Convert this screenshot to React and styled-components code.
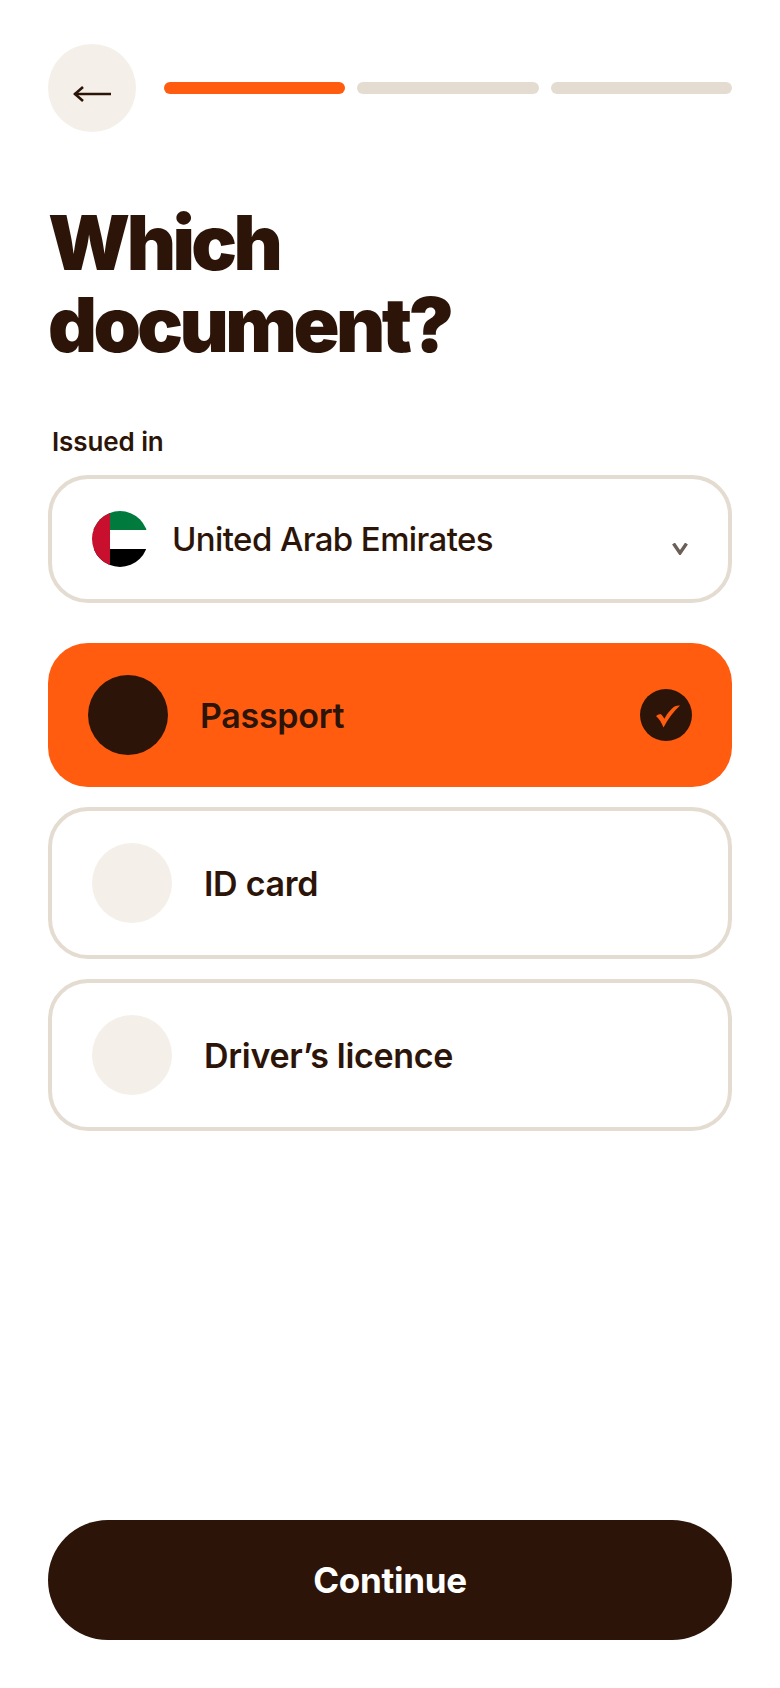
import styled, { createGlobalStyle } from "styled-components";

const dark = "#2c1508";
const orange = "#ff5c10";
const sand = "#e4dcd1";
const cream = "#f4f0e9";

const GlobalStyle = createGlobalStyle`
  html, body { margin: 0; padding: 0; background: #fff; }
  body { font-family: Inter, "Liberation Sans", sans-serif; color: ${dark}; }
`;

const Page = styled.div`
  box-sizing: border-box;
  width: 780px;
  height: 1688px;
  padding: 44px 48px 48px;
  display: flex;
  flex-direction: column;
`;

const TopBar = styled.div`
  display: flex;
  align-items: center;
  gap: 28px;
`;

const BackButton = styled.button`
  flex: none;
  width: 88px;
  height: 88px;
  padding: 11px 0 0;
  border: none;
  border-radius: 50%;
  background: ${cream};
  display: flex;
  align-items: center;
  justify-content: center;
`;

const Progress = styled.div`
  flex: 1;
  display: flex;
  gap: 12px;
`;

const Step = styled.div`
  flex: 1;
  height: 12px;
  border-radius: 6px;
  background: ${(p) => (p.$active ? orange : sand)};
`;

const Title = styled.h1`
  margin: 69px 0 0;
  font-size: 76px;
  line-height: 82px;
  font-weight: 900;
  letter-spacing: -3.6px;
`;

const Label = styled.div`
  margin: 61px 0 0 4px;
  font-size: 26px;
  line-height: 32px;
  font-weight: 600;
  letter-spacing: -0.1px;
`;

const Select = styled.div`
  box-sizing: border-box;
  margin-top: 17px;
  height: 128px;
  padding: 0 40px;
  border: 4px solid ${sand};
  border-radius: 40px;
  display: flex;
  align-items: center;
  gap: 24px;
`;

const Flag = styled.svg`
  flex: none;
  width: 56px;
  height: 56px;
  border-radius: 50%;
`;

const SelectText = styled.span`
  flex: 1;
  font-size: 33px;
  font-weight: 500;
  letter-spacing: -0.6px;
`;

const Chevron = styled.svg`
  flex: none;
  margin: 20px 0 0;
`;

const Options = styled.div`
  margin-top: 40px;
  display: flex;
  flex-direction: column;
  gap: 20px;
`;

const Option = styled.div`
  padding: 32px 40px;
  border: ${(p) => (p.$selected ? "none" : `4px solid ${sand}`)};
  border-radius: 40px;
  background: ${(p) => (p.$selected ? orange : "#fff")};
  display: flex;
  align-items: center;
  gap: 32px;
`;

const OptionIcon = styled.div`
  flex: none;
  width: 80px;
  height: 80px;
  border-radius: 50%;
  background: ${(p) => (p.$selected ? dark : cream)};
`;

const OptionText = styled.span`
  flex: 1;
  font-size: 34px;
  font-weight: 600;
  letter-spacing: -0.3px;
`;

const Check = styled.svg`
  flex: none;
  width: 52px;
  height: 52px;
`;

const Continue = styled.button`
  margin-top: auto;
  height: 120px;
  border: none;
  border-radius: 60px;
  background: ${dark};
  color: #fff;
  font-family: inherit;
  font-size: 35px;
  font-weight: 700;
  letter-spacing: -0.3px;
`;

export default function App() {
  return (
    <Page>
      <GlobalStyle />
      <TopBar>
        <BackButton aria-label="Back">
          <svg width="38" height="16" viewBox="0 0 38 16" fill="none" stroke={dark}>
            <path d="M1.5 8H38" strokeWidth="2.6" />
            <path d="M10 1L2 8L10 15" strokeWidth="2.6" />
          </svg>
        </BackButton>
        <Progress>
          <Step $active />
          <Step />
          <Step />
        </Progress>
      </TopBar>

      <Title>
        Which
        <br />
        document?
      </Title>

      <Label>Issued in</Label>
      <Select>
        <Flag viewBox="0 0 56 56">
          <rect width="56" height="19" fill="#007a3d" />
          <rect y="19" width="56" height="19" fill="#fff" />
          <rect y="38" width="56" height="18" fill="#000" />
          <rect width="18" height="56" fill="#c8102e" />
        </Flag>
        <SelectText>United Arab Emirates</SelectText>
        <Chevron width="16" height="12" viewBox="0 0 16 12" fill="none" stroke="#6b5f57" strokeWidth="3.4">
          <path d="M1.5 0.5L8 10L14.5 0.5" />
        </Chevron>
      </Select>

      <Options>
        <Option $selected>
          <OptionIcon $selected />
          <OptionText>Passport</OptionText>
          <Check viewBox="0 0 52 52">
            <circle cx="26" cy="26" r="26" fill={dark} />
            <path
              d="M16 27C17.5 25.8 19.5 25 20.8 25C22.2 26.3 23.5 28 24.4 29.8C27 25 31 20 34.5 17.6C36.5 16.8 38.5 16.4 40 16.6C33.5 22.5 28 30 23.5 38.5C21.5 33.5 19 29.5 16 27Z"
              fill={orange}
            />
          </Check>
        </Option>
        <Option>
          <OptionIcon />
          <OptionText>ID card</OptionText>
        </Option>
        <Option>
          <OptionIcon />
          <OptionText>Driver’s licence</OptionText>
        </Option>
      </Options>

      <Continue>Continue</Continue>
    </Page>
  );
}
